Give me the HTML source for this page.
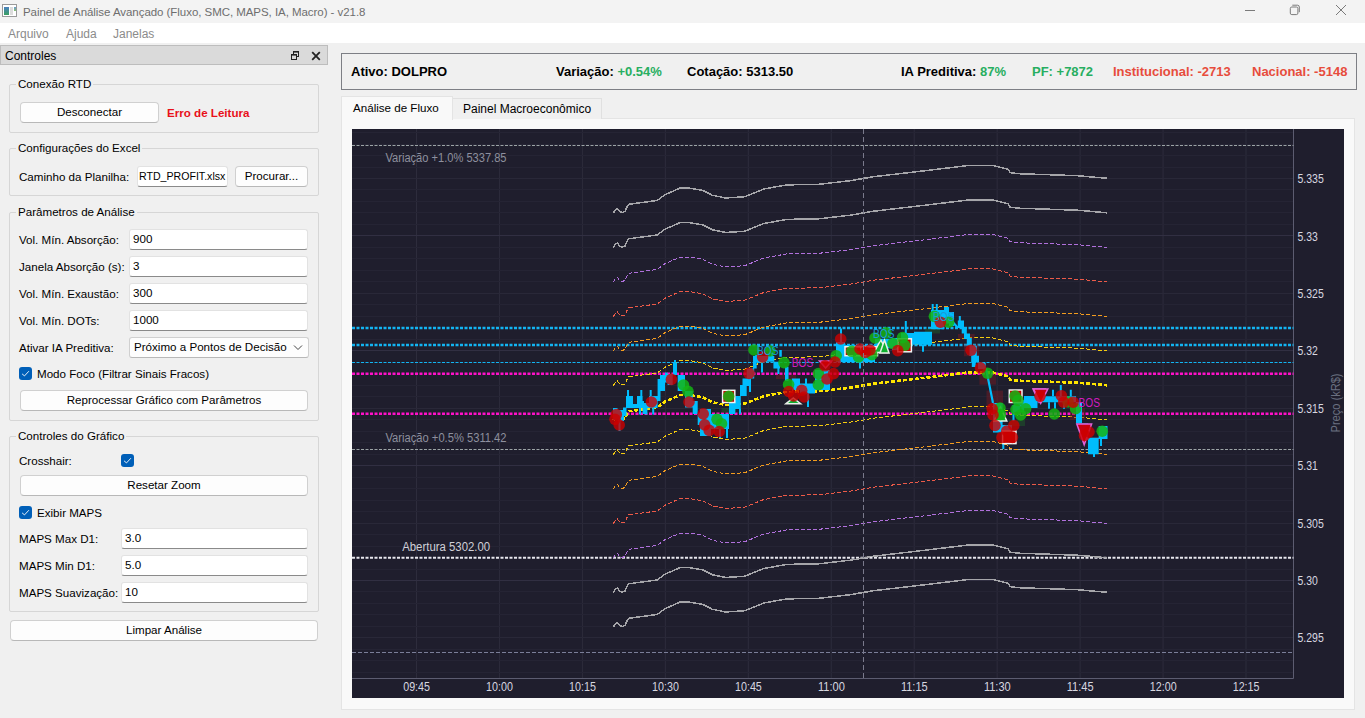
<!DOCTYPE html>
<html><head><meta charset="utf-8">
<style>
*{margin:0;padding:0;box-sizing:border-box}
html,body{width:1365px;height:718px;overflow:hidden;background:#f0f0f0;font-family:"Liberation Sans",sans-serif;font-size:11.6px;color:#000}
.a{position:absolute;white-space:nowrap}
#tb{position:absolute;left:0;top:0;width:1365px;height:23px;background:#f3f3f3}
#mb{position:absolute;left:0;top:23px;width:1365px;height:20px;background:#fff}
.mi{position:absolute;top:27px;color:#8b8b8b;font-size:12px}
#dockt{position:absolute;left:0;top:45px;width:328px;height:20px;background:#dadada;border:1px solid #bdbdbd}
.grp{position:absolute;border:1px solid #d6d6d6;border-radius:2px}
.gt{position:absolute;background:#f0f0f0;padding:0 2px;line-height:13px}
.btn{position:absolute;background:#fdfdfd;border:1px solid #d0d0d0;border-bottom-color:#b8b8b8;border-radius:4px;text-align:center;line-height:18px}
.inp{position:absolute;background:#fff;border:1px solid #e2e2e2;border-bottom:1px solid #8a8a8a;border-radius:3px;padding-left:3px;line-height:18px}
.lbl{position:absolute;line-height:14px}
.chk{position:absolute;width:13px;height:13px;background:#005fb8;border-radius:3px}
.chk svg{position:absolute;left:0;top:0}
</style></head><body>
<div id="tb"></div>
<!-- app icon -->
<div class="a" style="left:2px;top:4px;width:15px;height:13px;border:1px solid #9a9a9a;background:#fff">
 <div class="a" style="left:1px;top:2px;width:5px;height:8px;background:linear-gradient(#4a7fc0,#3aa060)"></div>
 <div class="a" style="left:7px;top:2px;width:3px;height:8px;background:#ddd"></div>
 <div class="a" style="left:11px;top:2px;width:2px;height:4px;background:linear-gradient(#6a9ad0,#8ac070)"></div>
</div>
<div class="a" style="left:23px;top:5px;font-size:11.5px;color:#6e6e6e;line-height:14px;letter-spacing:-0.05px">Painel de Análise Avançado (Fluxo, SMC, MAPS, IA, Macro) - v21.8</div>
<!-- window controls -->
<div class="a" style="left:1245px;top:10px;width:10px;height:1px;background:#7a7a7a"></div>
<svg class="a" style="left:1288px;top:4px" width="14" height="13"><rect x="2.3" y="3" width="7.6" height="7.6" rx="1.5" fill="none" stroke="#7a7a7a"/><path d="M4.3 1.2h5.2a1.8 1.8 0 0 1 1.8 1.8v5.2" fill="none" stroke="#7a7a7a"/></svg>
<svg class="a" style="left:1335px;top:4px" width="12" height="12"><path d="M1 1L11 11M11 1L1 11" stroke="#7a7a7a" stroke-width="1"/></svg>
<div id="mb"></div>
<div class="mi" style="left:8px">Arquivo</div>
<div class="mi" style="left:66px">Ajuda</div>
<div class="mi" style="left:113px">Janelas</div>

<!-- dock -->
<div id="dockt"></div>
<div class="a" style="left:5px;top:49px;font-size:12px;line-height:14px">Controles</div>
<svg class="a" style="left:290px;top:50px" width="11" height="11"><rect x="3.5" y="1.5" width="5" height="5" fill="#dadada" stroke="#222"/><rect x="3" y="1" width="6" height="1.6" fill="#222"/><rect x="1.5" y="4.5" width="5" height="5" fill="#dadada" stroke="#222"/><rect x="1" y="4" width="6" height="1.6" fill="#222"/></svg>
<svg class="a" style="left:310.5px;top:51px" width="10" height="10"><path d="M1.2 1.2L8.8 8.8M8.8 1.2L1.2 8.8" stroke="#222" stroke-width="1.8"/></svg>

<!-- Conexao RTD -->
<div class="grp" style="left:9px;top:84px;width:310px;height:49px"></div>
<div class="gt" style="left:16px;top:77px">Conexão RTD</div>
<div class="btn" style="left:20px;top:102px;width:139px;height:21px">Desconectar</div>
<div class="lbl" style="left:167px;top:106px;color:#e8101a;font-weight:bold">Erro de Leitura</div>

<!-- Excel -->
<div class="grp" style="left:9px;top:148px;width:310px;height:48px"></div>
<div class="gt" style="left:16px;top:141px">Configurações do Excel</div>
<div class="lbl" style="left:19px;top:170px">Caminho da Planilha:</div>
<div class="inp" style="left:137px;top:166px;width:91px;height:21px;font-size:10.6px;padding-left:1px">RTD_PROFIT.xlsx</div>
<div class="btn" style="left:235px;top:166px;width:73px;height:21px">Procurar...</div>

<!-- Parametros -->
<div class="grp" style="left:9px;top:212px;width:310px;height:209px"></div>
<div class="gt" style="left:16px;top:205px">Parâmetros de Análise</div>
<div class="lbl" style="left:19px;top:233px">Vol. Mín. Absorção:</div>
<div class="inp" style="left:129px;top:229px;width:179px;height:21px">900</div>
<div class="lbl" style="left:19px;top:260px">Janela Absorção (s):</div>
<div class="inp" style="left:129px;top:256px;width:179px;height:21px">3</div>
<div class="lbl" style="left:19px;top:287px">Vol. Mín. Exaustão:</div>
<div class="inp" style="left:129px;top:283px;width:179px;height:21px">300</div>
<div class="lbl" style="left:19px;top:314px">Vol. Mín. DOTs:</div>
<div class="inp" style="left:129px;top:310px;width:179px;height:21px">1000</div>
<div class="lbl" style="left:19px;top:341px">Ativar IA Preditiva:</div>
<div class="btn" style="left:129px;top:337px;width:180px;height:21px;text-align:left;padding-left:4px;border-radius:3px">Próximo a Pontos de Decisão</div>
<svg class="a" style="left:293px;top:344px" width="10" height="7"><path d="M1 1.5L5 5.5L9 1.5" fill="none" stroke="#444" stroke-width="1"/></svg>
<div class="chk" style="left:19px;top:367px"><svg width="13" height="13"><path d="M3.1 6.9L5.5 8.9L9.9 4.2" fill="none" stroke="#fff" stroke-width="0.9"/></svg></div>
<div class="lbl" style="left:37px;top:367px">Modo Foco (Filtrar Sinais Fracos)</div>
<div class="btn" style="left:20px;top:390px;width:288px;height:21px">Reprocessar Gráfico com Parâmetros</div>

<!-- Controles do Grafico -->
<div class="grp" style="left:9px;top:436px;width:310px;height:176px"></div>
<div class="gt" style="left:16px;top:429px">Controles do Gráfico</div>
<div class="lbl" style="left:19px;top:454px">Crosshair:</div>
<div class="chk" style="left:121px;top:454px"><svg width="13" height="13"><path d="M3.1 6.9L5.5 8.9L9.9 4.2" fill="none" stroke="#fff" stroke-width="0.9"/></svg></div>
<div class="btn" style="left:20px;top:475px;width:288px;height:21px">Resetar Zoom</div>
<div class="chk" style="left:19px;top:506px"><svg width="13" height="13"><path d="M3.1 6.9L5.5 8.9L9.9 4.2" fill="none" stroke="#fff" stroke-width="0.9"/></svg></div>
<div class="lbl" style="left:37px;top:506px">Exibir MAPS</div>
<div class="lbl" style="left:19px;top:532px">MAPS Max D1:</div>
<div class="inp" style="left:121px;top:528px;width:187px;height:21px">3.0</div>
<div class="lbl" style="left:19px;top:559px">MAPS Min D1:</div>
<div class="inp" style="left:121px;top:555px;width:187px;height:21px">5.0</div>
<div class="lbl" style="left:19px;top:586px">MAPS Suavização:</div>
<div class="inp" style="left:121px;top:582px;width:187px;height:21px">10</div>
<div class="btn" style="left:10px;top:620px;width:308px;height:21px">Limpar Análise</div>

<!-- RIGHT -->
<div class="a" style="left:341px;top:53px;width:1016px;height:37px;border:1px solid #7d7f85;background:#f0f0f0"></div>
<div class="a" style="top:64px;font-size:13px;font-weight:bold;line-height:15px;left:351px">Ativo: DOLPRO</div>
<div class="a" style="top:64px;font-size:13px;font-weight:bold;line-height:15px;left:556px">Variação: <span style="color:#27ae60">+0.54%</span></div>
<div class="a" style="top:64px;font-size:13px;font-weight:bold;line-height:15px;left:687px">Cotação: 5313.50</div>
<div class="a" style="top:64px;font-size:13px;font-weight:bold;line-height:15px;left:901px">IA Preditiva: <span style="color:#27ae60">87%</span></div>
<div class="a" style="top:64px;font-size:13px;font-weight:bold;line-height:15px;left:1032px;color:#27ae60">PF: +7872</div>
<div class="a" style="top:64px;font-size:13px;font-weight:bold;line-height:15px;left:1113px;color:#e74c3c">Institucional: -2713</div>
<div class="a" style="top:64px;font-size:13px;font-weight:bold;line-height:15px;left:1252px;color:#e74c3c">Nacional: -5148</div>

<!-- tabs -->
<div class="a" style="left:341px;top:118px;width:1014px;height:592px;background:#f9f9f9;border:1px solid #e4e4e4"></div>
<div class="a" style="left:452px;top:98px;width:150px;height:21px;background:#f0f0f0;border:1px solid #e0e0e0;border-bottom:none"></div>
<div class="a" style="left:341px;top:96px;width:112px;height:24px;background:#f9f9f9;border:1px solid #e4e4e4;border-bottom:none"></div>
<div class="a" style="left:353px;top:101px;font-size:11.6px;line-height:14px">Análise de Fluxo</div>
<div class="a" style="left:463px;top:102px;font-size:12px;line-height:14px">Painel Macroeconômico</div>

<!-- chart -->
<div class="a" style="left:352px;top:129px;width:992px;height:569px;background:#1f1e2d"></div>
<svg id="chart" class="a" style="left:0;top:0" width="1365" height="718">
<line x1="416.50" y1="129" x2="416.50" y2="678.5" stroke="#2d2c3c" stroke-width="1"/>
<line x1="499.45" y1="129" x2="499.45" y2="678.5" stroke="#2d2c3c" stroke-width="1"/>
<line x1="582.40" y1="129" x2="582.40" y2="678.5" stroke="#2d2c3c" stroke-width="1"/>
<line x1="665.35" y1="129" x2="665.35" y2="678.5" stroke="#2d2c3c" stroke-width="1"/>
<line x1="748.30" y1="129" x2="748.30" y2="678.5" stroke="#2d2c3c" stroke-width="1"/>
<line x1="831.25" y1="129" x2="831.25" y2="678.5" stroke="#2d2c3c" stroke-width="1"/>
<line x1="914.20" y1="129" x2="914.20" y2="678.5" stroke="#2d2c3c" stroke-width="1"/>
<line x1="997.15" y1="129" x2="997.15" y2="678.5" stroke="#2d2c3c" stroke-width="1"/>
<line x1="1080.10" y1="129" x2="1080.10" y2="678.5" stroke="#2d2c3c" stroke-width="1"/>
<line x1="1163.05" y1="129" x2="1163.05" y2="678.5" stroke="#2d2c3c" stroke-width="1"/>
<line x1="1246.00" y1="129" x2="1246.00" y2="678.5" stroke="#2d2c3c" stroke-width="1"/>
<line x1="352" y1="132.50" x2="1293.5" y2="132.50" stroke="#252434" stroke-width="1"/>
<line x1="352" y1="144.50" x2="1293.5" y2="144.50" stroke="#252434" stroke-width="1"/>
<line x1="352" y1="155.50" x2="1293.5" y2="155.50" stroke="#252434" stroke-width="1"/>
<line x1="352" y1="167.50" x2="1293.5" y2="167.50" stroke="#252434" stroke-width="1"/>
<line x1="352" y1="178.50" x2="1293.5" y2="178.50" stroke="#292838" stroke-width="1"/>
<line x1="352" y1="189.50" x2="1293.5" y2="189.50" stroke="#252434" stroke-width="1"/>
<line x1="352" y1="201.50" x2="1293.5" y2="201.50" stroke="#252434" stroke-width="1"/>
<line x1="352" y1="212.50" x2="1293.5" y2="212.50" stroke="#252434" stroke-width="1"/>
<line x1="352" y1="224.50" x2="1293.5" y2="224.50" stroke="#252434" stroke-width="1"/>
<line x1="352" y1="235.50" x2="1293.5" y2="235.50" stroke="#312f42" stroke-width="1"/>
<line x1="352" y1="247.50" x2="1293.5" y2="247.50" stroke="#252434" stroke-width="1"/>
<line x1="352" y1="258.50" x2="1293.5" y2="258.50" stroke="#252434" stroke-width="1"/>
<line x1="352" y1="270.50" x2="1293.5" y2="270.50" stroke="#252434" stroke-width="1"/>
<line x1="352" y1="281.50" x2="1293.5" y2="281.50" stroke="#252434" stroke-width="1"/>
<line x1="352" y1="293.50" x2="1293.5" y2="293.50" stroke="#292838" stroke-width="1"/>
<line x1="352" y1="304.50" x2="1293.5" y2="304.50" stroke="#252434" stroke-width="1"/>
<line x1="352" y1="316.50" x2="1293.5" y2="316.50" stroke="#252434" stroke-width="1"/>
<line x1="352" y1="327.50" x2="1293.5" y2="327.50" stroke="#252434" stroke-width="1"/>
<line x1="352" y1="339.50" x2="1293.5" y2="339.50" stroke="#252434" stroke-width="1"/>
<line x1="352" y1="350.50" x2="1293.5" y2="350.50" stroke="#312f42" stroke-width="1"/>
<line x1="352" y1="362.50" x2="1293.5" y2="362.50" stroke="#252434" stroke-width="1"/>
<line x1="352" y1="373.50" x2="1293.5" y2="373.50" stroke="#252434" stroke-width="1"/>
<line x1="352" y1="385.50" x2="1293.5" y2="385.50" stroke="#252434" stroke-width="1"/>
<line x1="352" y1="396.50" x2="1293.5" y2="396.50" stroke="#252434" stroke-width="1"/>
<line x1="352" y1="408.50" x2="1293.5" y2="408.50" stroke="#292838" stroke-width="1"/>
<line x1="352" y1="419.50" x2="1293.5" y2="419.50" stroke="#252434" stroke-width="1"/>
<line x1="352" y1="431.50" x2="1293.5" y2="431.50" stroke="#252434" stroke-width="1"/>
<line x1="352" y1="442.50" x2="1293.5" y2="442.50" stroke="#252434" stroke-width="1"/>
<line x1="352" y1="454.50" x2="1293.5" y2="454.50" stroke="#252434" stroke-width="1"/>
<line x1="352" y1="465.50" x2="1293.5" y2="465.50" stroke="#312f42" stroke-width="1"/>
<line x1="352" y1="477.50" x2="1293.5" y2="477.50" stroke="#252434" stroke-width="1"/>
<line x1="352" y1="488.50" x2="1293.5" y2="488.50" stroke="#252434" stroke-width="1"/>
<line x1="352" y1="500.50" x2="1293.5" y2="500.50" stroke="#252434" stroke-width="1"/>
<line x1="352" y1="511.50" x2="1293.5" y2="511.50" stroke="#252434" stroke-width="1"/>
<line x1="352" y1="523.50" x2="1293.5" y2="523.50" stroke="#292838" stroke-width="1"/>
<line x1="352" y1="534.50" x2="1293.5" y2="534.50" stroke="#252434" stroke-width="1"/>
<line x1="352" y1="546.50" x2="1293.5" y2="546.50" stroke="#252434" stroke-width="1"/>
<line x1="352" y1="557.50" x2="1293.5" y2="557.50" stroke="#252434" stroke-width="1"/>
<line x1="352" y1="569.50" x2="1293.5" y2="569.50" stroke="#252434" stroke-width="1"/>
<line x1="352" y1="580.50" x2="1293.5" y2="580.50" stroke="#312f42" stroke-width="1"/>
<line x1="352" y1="591.50" x2="1293.5" y2="591.50" stroke="#252434" stroke-width="1"/>
<line x1="352" y1="603.50" x2="1293.5" y2="603.50" stroke="#252434" stroke-width="1"/>
<line x1="352" y1="614.50" x2="1293.5" y2="614.50" stroke="#252434" stroke-width="1"/>
<line x1="352" y1="626.50" x2="1293.5" y2="626.50" stroke="#252434" stroke-width="1"/>
<line x1="352" y1="637.50" x2="1293.5" y2="637.50" stroke="#292838" stroke-width="1"/>
<line x1="352" y1="649.50" x2="1293.5" y2="649.50" stroke="#252434" stroke-width="1"/>
<line x1="352" y1="660.50" x2="1293.5" y2="660.50" stroke="#252434" stroke-width="1"/>
<line x1="352" y1="672.50" x2="1293.5" y2="672.50" stroke="#252434" stroke-width="1"/>
<line x1="1293.5" y1="129" x2="1293.5" y2="678.5" stroke="#5c5c70" stroke-width="1"/>
<line x1="352" y1="678.5" x2="1293.5" y2="678.5" stroke="#5c5c70" stroke-width="1"/>
<text x="1297.5" y="183.2" fill="#d8d8e0" font-size="12" textLength="26.3" lengthAdjust="spacingAndGlyphs">5.335</text>
<text x="1297.5" y="240.6" fill="#d8d8e0" font-size="12" textLength="20.3" lengthAdjust="spacingAndGlyphs">5.33</text>
<text x="1297.5" y="298.0" fill="#d8d8e0" font-size="12" textLength="26.3" lengthAdjust="spacingAndGlyphs">5.325</text>
<text x="1297.5" y="355.4" fill="#d8d8e0" font-size="12" textLength="20.3" lengthAdjust="spacingAndGlyphs">5.32</text>
<text x="1297.5" y="412.8" fill="#d8d8e0" font-size="12" textLength="26.3" lengthAdjust="spacingAndGlyphs">5.315</text>
<text x="1297.5" y="470.2" fill="#d8d8e0" font-size="12" textLength="20.3" lengthAdjust="spacingAndGlyphs">5.31</text>
<text x="1297.5" y="527.6" fill="#d8d8e0" font-size="12" textLength="26.3" lengthAdjust="spacingAndGlyphs">5.305</text>
<text x="1297.5" y="585.0" fill="#d8d8e0" font-size="12" textLength="20.3" lengthAdjust="spacingAndGlyphs">5.30</text>
<text x="1297.5" y="642.4" fill="#d8d8e0" font-size="12" textLength="26.3" lengthAdjust="spacingAndGlyphs">5.295</text>
<text x="403.2" y="691" fill="#d8d8e0" font-size="12" textLength="26.8" lengthAdjust="spacingAndGlyphs">09:45</text>
<text x="486.1" y="691" fill="#d8d8e0" font-size="12" textLength="26.8" lengthAdjust="spacingAndGlyphs">10:00</text>
<text x="569.1" y="691" fill="#d8d8e0" font-size="12" textLength="26.8" lengthAdjust="spacingAndGlyphs">10:15</text>
<text x="652.1" y="691" fill="#d8d8e0" font-size="12" textLength="26.8" lengthAdjust="spacingAndGlyphs">10:30</text>
<text x="735.0" y="691" fill="#d8d8e0" font-size="12" textLength="26.8" lengthAdjust="spacingAndGlyphs">10:45</text>
<text x="818.0" y="691" fill="#d8d8e0" font-size="12" textLength="26.8" lengthAdjust="spacingAndGlyphs">11:00</text>
<text x="900.9" y="691" fill="#d8d8e0" font-size="12" textLength="26.8" lengthAdjust="spacingAndGlyphs">11:15</text>
<text x="983.9" y="691" fill="#d8d8e0" font-size="12" textLength="26.8" lengthAdjust="spacingAndGlyphs">11:30</text>
<text x="1066.8" y="691" fill="#d8d8e0" font-size="12" textLength="26.8" lengthAdjust="spacingAndGlyphs">11:45</text>
<text x="1149.8" y="691" fill="#d8d8e0" font-size="12" textLength="26.8" lengthAdjust="spacingAndGlyphs">12:00</text>
<text x="1232.7" y="691" fill="#d8d8e0" font-size="12" textLength="26.8" lengthAdjust="spacingAndGlyphs">12:15</text>
<text transform="translate(1339.5,432.5) rotate(-90)" fill="#6a7080" font-size="12" textLength="59" lengthAdjust="spacingAndGlyphs">Preço (kR$)</text>
<line x1="352" y1="145.5" x2="1293.5" y2="145.5" stroke="#9ca4a6" stroke-width="1.1" stroke-dasharray="3 1.5"/>
<line x1="352" y1="449.5" x2="1293.5" y2="449.5" stroke="#9ca4a6" stroke-width="1.1" stroke-dasharray="3 1.5"/>
<line x1="352" y1="652.5" x2="1293.5" y2="652.5" stroke="#7a7e98" stroke-width="1.1" stroke-dasharray="4 2"/>
<line x1="352" y1="557.8" x2="1293.5" y2="557.8" stroke="#e8e8ee" stroke-width="2" stroke-dasharray="3 1.5"/>
<line x1="352" y1="328" x2="1293.5" y2="328" stroke="#12b4f2" stroke-width="2.4" stroke-dasharray="3 1.5"/>
<line x1="352" y1="345" x2="1293.5" y2="345" stroke="#12b4f2" stroke-width="2.4" stroke-dasharray="3 1.5"/>
<line x1="352" y1="362.5" x2="1293.5" y2="362.5" stroke="#12b4f2" stroke-width="1.2" stroke-dasharray="3 1.5"/>
<line x1="352" y1="373.8" x2="1293.5" y2="373.8" stroke="#ff10c8" stroke-width="2.4" stroke-dasharray="3 1.5"/>
<line x1="352" y1="413.8" x2="1293.5" y2="413.8" stroke="#ff10c8" stroke-width="2.4" stroke-dasharray="3 1.5"/>
<text x="385.5" y="162" fill="#8e909e" font-size="12" textLength="121" lengthAdjust="spacingAndGlyphs">Variação +1.0% 5337.85</text>
<text x="385.5" y="442" fill="#8e909e" font-size="12" textLength="121" lengthAdjust="spacingAndGlyphs">Variação +0.5% 5311.42</text>
<text x="402.2" y="551" fill="#d0d0d8" font-size="12" textLength="88" lengthAdjust="spacingAndGlyphs">Abertura 5302.00</text>
<polyline points="613.3,213.2 615.5,209.5 617.5,208.5 619.5,211.5 622.0,212.5 625.0,211.5 627.0,207.0 628.6,204.3 657.1,200.5 664.8,194.8 680.0,188.1 689.5,188.1 702.9,190.4 712.4,195.3 725.7,198.0 744.8,196.7 763.8,189.0 786.7,184.9 819.0,184.3 850.0,180.7 873.7,176.7 933.0,169.8 968.7,165.4 992.4,165.4 1008.2,169.4 1010.2,172.7 1018.1,173.7 1047.8,174.7 1077.5,175.7 1107.1,178.3" fill="none" stroke="#a6a6aa" stroke-width="1.5" shape-rendering="crispEdges"/>
<polyline points="613.3,247.7 615.5,244.0 617.5,243.0 619.5,246.0 622.0,247.0 625.0,246.0 627.0,241.5 628.6,238.8 657.1,235.0 664.8,229.3 680.0,222.6 689.5,222.6 702.9,224.9 712.4,229.8 725.7,232.5 744.8,231.2 763.8,223.5 786.7,219.4 819.0,218.8 850.0,215.2 873.7,211.2 933.0,204.3 968.7,199.9 992.4,199.9 1008.2,203.9 1010.2,207.2 1018.1,208.2 1047.8,209.2 1077.5,210.2 1107.1,212.8" fill="none" stroke="#a6a6aa" stroke-width="1.5" shape-rendering="crispEdges"/>
<polyline points="613.3,282.2 615.5,278.5 617.5,277.5 619.5,280.5 622.0,281.5 625.0,280.5 627.0,276.0 628.6,273.3 657.1,269.5 664.8,263.8 680.0,257.1 689.5,257.1 702.9,259.4 712.4,264.3 725.7,267.0 744.8,265.7 763.8,258.0 786.7,253.9 819.0,253.3 850.0,249.7 873.7,245.7 933.0,238.8 968.7,234.4 992.4,234.4 1008.2,238.4 1010.2,241.7 1018.1,242.7 1047.8,243.7 1077.5,244.7 1107.1,247.3" fill="none" stroke="#b070dc" stroke-width="1" stroke-dasharray="4 2" shape-rendering="crispEdges"/>
<polyline points="613.3,316.7 615.5,313.0 617.5,312.0 619.5,315.0 622.0,316.0 625.0,315.0 627.0,310.5 628.6,307.8 657.1,304.0 664.8,298.3 680.0,291.6 689.5,291.6 702.9,293.9 712.4,298.8 725.7,301.5 744.8,300.2 763.8,292.5 786.7,288.4 819.0,287.8 850.0,284.2 873.7,280.2 933.0,273.3 968.7,268.9 992.4,268.9 1008.2,272.9 1010.2,276.2 1018.1,277.2 1047.8,278.2 1077.5,279.2 1107.1,281.8" fill="none" stroke="#ec5a48" stroke-width="1" stroke-dasharray="4 2" shape-rendering="crispEdges"/>
<polyline points="613.3,351.2 615.5,347.5 617.5,346.5 619.5,349.5 622.0,350.5 625.0,349.5 627.0,345.0 628.6,342.3 657.1,338.5 664.8,332.8 680.0,326.1 689.5,326.1 702.9,328.4 712.4,333.3 725.7,336.0 744.8,334.7 763.8,327.0 786.7,322.9 819.0,322.3 850.0,318.7 873.7,314.7 933.0,307.8 968.7,303.4 992.4,303.4 1008.2,307.4 1010.2,310.7 1018.1,311.7 1047.8,312.7 1077.5,313.7 1107.1,316.3" fill="none" stroke="#f39c1e" stroke-width="1" stroke-dasharray="4 2" shape-rendering="crispEdges"/>
<polyline points="613.3,385.7 615.5,382.0 617.5,381.0 619.5,384.0 622.0,385.0 625.0,384.0 627.0,379.5 628.6,376.8 657.1,373.0 664.8,367.3 680.0,360.6 689.5,360.6 702.9,362.9 712.4,367.8 725.7,370.5 744.8,369.2 763.8,361.5 786.7,357.4 819.0,356.8 850.0,353.2 873.7,349.2 933.0,342.3 968.7,337.9 992.4,337.9 1008.2,341.9 1010.2,345.2 1018.1,346.2 1047.8,347.2 1077.5,348.2 1107.1,350.8" fill="none" stroke="#f5cc10" stroke-width="1" stroke-dasharray="4 2" shape-rendering="crispEdges"/>
<polyline points="613.3,420.2 615.5,416.5 617.5,415.5 619.5,418.5 622.0,419.5 625.0,418.5 627.0,414.0 628.6,411.3 657.1,407.5 664.8,401.8 680.0,395.1 689.5,395.1 702.9,397.4 712.4,402.3 725.7,405.0 744.8,403.7 763.8,396.0 786.7,391.9 819.0,391.3 850.0,387.7 873.7,383.7 933.0,376.8 968.7,372.4 992.4,372.4 1008.2,376.4 1010.2,379.7 1018.1,380.7 1047.8,381.7 1077.5,382.7 1107.1,385.3" fill="none" stroke="#ffe400" stroke-width="2.6" stroke-dasharray="4 2" shape-rendering="crispEdges"/>
<polyline points="613.3,454.7 615.5,451.0 617.5,450.0 619.5,453.0 622.0,454.0 625.0,453.0 627.0,448.5 628.6,445.8 657.1,442.0 664.8,436.3 680.0,429.6 689.5,429.6 702.9,431.9 712.4,436.8 725.7,439.5 744.8,438.2 763.8,430.5 786.7,426.4 819.0,425.8 850.0,422.2 873.7,418.2 933.0,411.3 968.7,406.9 992.4,406.9 1008.2,410.9 1010.2,414.2 1018.1,415.2 1047.8,416.2 1077.5,417.2 1107.1,419.8" fill="none" stroke="#f5cc10" stroke-width="1" stroke-dasharray="4 2" shape-rendering="crispEdges"/>
<polyline points="613.3,489.2 615.5,485.5 617.5,484.5 619.5,487.5 622.0,488.5 625.0,487.5 627.0,483.0 628.6,480.3 657.1,476.5 664.8,470.8 680.0,464.1 689.5,464.1 702.9,466.4 712.4,471.3 725.7,474.0 744.8,472.7 763.8,465.0 786.7,460.9 819.0,460.3 850.0,456.7 873.7,452.7 933.0,445.8 968.7,441.4 992.4,441.4 1008.2,445.4 1010.2,448.7 1018.1,449.7 1047.8,450.7 1077.5,451.7 1107.1,454.3" fill="none" stroke="#f39c1e" stroke-width="1" stroke-dasharray="4 2" shape-rendering="crispEdges"/>
<polyline points="613.3,523.7 615.5,520.0 617.5,519.0 619.5,522.0 622.0,523.0 625.0,522.0 627.0,517.5 628.6,514.8 657.1,511.0 664.8,505.3 680.0,498.6 689.5,498.6 702.9,500.9 712.4,505.8 725.7,508.5 744.8,507.2 763.8,499.5 786.7,495.4 819.0,494.8 850.0,491.2 873.7,487.2 933.0,480.3 968.7,475.9 992.4,475.9 1008.2,479.9 1010.2,483.2 1018.1,484.2 1047.8,485.2 1077.5,486.2 1107.1,488.8" fill="none" stroke="#ec5a48" stroke-width="1" stroke-dasharray="4 2" shape-rendering="crispEdges"/>
<polyline points="613.3,558.2 615.5,554.5 617.5,553.5 619.5,556.5 622.0,557.5 625.0,556.5 627.0,552.0 628.6,549.3 657.1,545.5 664.8,539.8 680.0,533.1 689.5,533.1 702.9,535.4 712.4,540.3 725.7,543.0 744.8,541.7 763.8,534.0 786.7,529.9 819.0,529.3 850.0,525.7 873.7,521.7 933.0,514.8 968.7,510.4 992.4,510.4 1008.2,514.4 1010.2,517.7 1018.1,518.7 1047.8,519.7 1077.5,520.7 1107.1,523.3" fill="none" stroke="#b070dc" stroke-width="1" stroke-dasharray="4 2" shape-rendering="crispEdges"/>
<polyline points="613.3,592.7 615.5,589.0 617.5,588.0 619.5,591.0 622.0,592.0 625.0,591.0 627.0,586.5 628.6,583.8 657.1,580.0 664.8,574.3 680.0,567.6 689.5,567.6 702.9,569.9 712.4,574.8 725.7,577.5 744.8,576.2 763.8,568.5 786.7,564.4 819.0,563.8 850.0,560.2 873.7,556.2 933.0,549.3 968.7,544.9 992.4,544.9 1008.2,548.9 1010.2,552.2 1018.1,553.2 1047.8,554.2 1077.5,555.2 1107.1,557.8" fill="none" stroke="#a6a6aa" stroke-width="1.5" shape-rendering="crispEdges"/>
<polyline points="613.3,627.2 615.5,623.5 617.5,622.5 619.5,625.5 622.0,626.5 625.0,625.5 627.0,621.0 628.6,618.3 657.1,614.5 664.8,608.8 680.0,602.1 689.5,602.1 702.9,604.4 712.4,609.3 725.7,612.0 744.8,610.7 763.8,603.0 786.7,598.9 819.0,598.3 850.0,594.7 873.7,590.7 933.0,583.8 968.7,579.4 992.4,579.4 1008.2,583.4 1010.2,586.7 1018.1,587.7 1047.8,588.7 1077.5,589.7 1107.1,592.3" fill="none" stroke="#a6a6aa" stroke-width="1.5" shape-rendering="crispEdges"/>
<rect x="776" y="374.7" width="20.0" height="4.3" fill="#7a1a24" fill-opacity="0.45"/>
<rect x="964" y="344.5" width="15.4" height="11.8" fill="#7a1a24" fill-opacity="0.45"/>
<rect x="979.4" y="374" width="16.6" height="10.7" fill="#7a1a24" fill-opacity="0.45"/>
<rect x="986.5" y="390.6" width="16.5" height="17.8" fill="#7a1a24" fill-opacity="0.45"/>
<rect x="958" y="334" width="16.7" height="4.8" fill="#7a1a24" fill-opacity="0.45"/>
<rect x="1070" y="408" width="15.0" height="12.0" fill="#7a1a24" fill-opacity="0.45"/>
<rect x="1090" y="437" width="10.0" height="4.0" fill="#7a1a24" fill-opacity="0.45"/>
<rect x="721.5" y="408" width="14.5" height="4.6" fill="#1e5a2a" fill-opacity="0.5"/>
<rect x="925" y="328.7" width="15.0" height="4.8" fill="#1e5a2a" fill-opacity="0.5"/>
<rect x="1009" y="420" width="16.0" height="6.0" fill="#1e5a2a" fill-opacity="0.5"/>
<path d="M613 408h4.5v12.0h-4.5zM617.5 410h6.5v11.0h-6.5zM623 407.6h3.5v8.4h-3.5zM626 396h16.6v12.0h-16.6zM642.6 401h3.9v13.0h-3.9zM646 396h11.6v12.0h-11.6zM657.6 379h2.9v22.0h-2.9zM660 375h5.0v16.0h-5.0zM665 372.5h2.6v10.0h-2.6zM667.6 374h5.1v11.0h-5.1zM673 362.5h4.0v12.5h-4.0zM677.7 375h7.3v16.0h-7.3zM685 391h7.7v16.6h-7.7zM692.7 401h5.0v13.0h-5.0zM697.7 414h7.3v11.0h-7.3zM700 409h11.0v27.0h-11.0zM711 414h18.0v15.0h-18.0zM729 400h6.3v14.0h-6.3zM735.3 396h5.5v13.0h-5.5zM740 385h6.7v11.0h-6.7zM742.5 378.4h8.5v7.6h-8.5zM746.7 368.4h7.5v10.0h-7.5zM753 356h3.7v12.4h-3.7zM755 355h4.2v7.6h-4.2zM759.2 356h3.4v6.6h-3.4zM762.6 356h11.7v5.7h-11.7zM773.4 361.7h6.6v6.7h-6.6zM779.3 350h2.5v6.7h-2.5zM785 366.7h3.5v14.3h-3.5zM791.8 378.4h8.2v11.6h-8.2zM800 383.6h15.0v10.0h-15.0zM815 370h15.0v20.0h-15.0zM836 342h9.0v20.0h-9.0zM843.5 345h31.5v17.0h-31.5zM875 338.8h17.0v9.5h-17.0zM892 338h9.0v12.0h-9.0zM901 332.9h13.0v11.8h-13.0zM914 331.7h18.0v13.0h-18.0zM931 310h13.0v19.3h-13.0zM944 307h5.0v16.4h-5.0zM949 312h5.0v14.0h-5.0zM957.8 320.6h6.2v7.4h-6.2zM961.7 328h5.1v5.4h-5.1zM964 333.4h6.0v5.6h-6.0zM966.8 338h5.0v7.7h-5.0zM969.5 345.7h7.3v10.0h-7.3zM971.2 355.7h7.8v6.7h-7.8zM971.8 362.4h3.9v4.6h-3.9zM978 362.4h7.7v6.6h-7.7zM993 403h9.6v29.5h-9.6zM1002.6 425h9.4v18.0h-9.4zM1024 396h13.5v12.0h-13.5zM1014 400h10.0v12.0h-10.0zM1030 396.3h46.0v5.9h-46.0zM1076 402h6.0v21.5h-6.0zM1082 423.5h6.0v16.5h-6.0zM1088 437.7h10.7v16.6h-10.7zM1098.7 426h8.8v13.0h-8.8z" fill="#00bdfd"/>
<path d="M986 368.4L993 403M950 319L958 328" stroke="#00bdfd" stroke-width="2.2"/>
<path d="M619.5 420V431M628 390V396M641.3 390V396M650.7 390V396M640 408V414.5M646.4 408V414.5M653.2 408V414.5M675 360V363M720 429V438M727 429V438M740 409V414M762 362.6V372.6M772 353V356M778.4 368V374M744 386V394M750 386V392M806 378.6V384M808 393.6V407M841 328.4V345M860 362V368.6M905.8 321V333M923 344.7V351.8M932.7 304V310M936.8 304V310M959.8 316V321M1003.3 443V449M1053 389.8V396.3M1060.8 385V396.3M1070.8 389.8V396.3M1049 402.2V408.7M1055 402.2V408.7M1064 402.2V408.7M1094 454V457M1013.5 405V421M1101 439V446" stroke="#00bdfd" stroke-width="2"/>
<rect x="633" y="396" width="4" height="8" fill="#1f1e2d"/>
<rect x="644" y="396" width="5" height="7" fill="#1f1e2d"/>
<rect x="722.6" y="390.3" width="12.2" height="12.2" fill="#c00000" stroke="#f4f4f4" stroke-width="1.5"/>
<rect x="845" y="346.8" width="16.0" height="8.9" fill="#c00000" stroke="#f4f4f4" stroke-width="1.5"/>
<rect x="861" y="346.8" width="16.5" height="8.9" fill="#c00000" stroke="#f4f4f4" stroke-width="1.5"/>
<rect x="897.8" y="338.8" width="13.6" height="13.0" fill="#c00000" stroke="#f4f4f4" stroke-width="1.5"/>
<rect x="1002.6" y="431" width="13.4" height="12.6" fill="#c00000" stroke="#f4f4f4" stroke-width="1.5"/>
<rect x="1009.3" y="390" width="12.7" height="12.5" fill="#c00000" stroke="#f4f4f4" stroke-width="1.5"/>
<path d="M786 403.7L793.3 398L800.6 403.7z" fill="#10b030" stroke="#e8f0e8" stroke-width="1.5"/>
<path d="M874 352.4L880.8 340L887.5 352.4z" fill="#10b030" stroke="#e8f0e8" stroke-width="1.5"/>
<path d="M880 353L884.5 340L889 353z" fill="#10b030" stroke="#e8f0e8" stroke-width="1.5"/>
<path d="M994 421L1000.4 407L1006.8 421z" fill="#10b030" stroke="#e8f0e8" stroke-width="1.5"/>
<path d="M819.5 361L831.8 361L825.6 368z" fill="#c80010" stroke="#e060d8" stroke-width="1.5"/>
<path d="M1033 389L1045 389L1039.0 402z" fill="#c80010" stroke="#e060d8" stroke-width="1.5"/>
<path d="M1033.5 389L1047.8 389L1040.7 403.4z" fill="#c80010" stroke="#e060d8" stroke-width="1.5"/>
<path d="M1076.8 424L1091.6 424L1084.2 444.8z" fill="#c80010" stroke="#e060d8" stroke-width="1.5"/>
<circle cx="683.5" cy="385" r="5.8" fill="#14b414" fill-opacity="0.85"/>
<circle cx="688" cy="391.4" r="5.8" fill="#14b414" fill-opacity="0.85"/>
<circle cx="717" cy="419.3" r="5.8" fill="#14b414" fill-opacity="0.85"/>
<circle cx="721.5" cy="423.7" r="5.8" fill="#14b414" fill-opacity="0.85"/>
<circle cx="754" cy="350" r="5.8" fill="#14b414" fill-opacity="0.85"/>
<circle cx="770" cy="351" r="5.8" fill="#14b414" fill-opacity="0.85"/>
<circle cx="784" cy="362.6" r="5.8" fill="#14b414" fill-opacity="0.85"/>
<circle cx="788.6" cy="384.5" r="5.8" fill="#14b414" fill-opacity="0.85"/>
<circle cx="818.4" cy="373.6" r="5.8" fill="#14b414" fill-opacity="0.85"/>
<circle cx="818.4" cy="384.7" r="5.8" fill="#14b414" fill-opacity="0.85"/>
<circle cx="836.2" cy="355.7" r="5.8" fill="#14b414" fill-opacity="0.85"/>
<circle cx="851.8" cy="351.3" r="5.8" fill="#14b414" fill-opacity="0.85"/>
<circle cx="858.5" cy="356.9" r="5.8" fill="#14b414" fill-opacity="0.85"/>
<circle cx="871.9" cy="354.6" r="5.8" fill="#14b414" fill-opacity="0.85"/>
<circle cx="875" cy="338" r="5.8" fill="#14b414" fill-opacity="0.85"/>
<circle cx="886" cy="332.9" r="5.8" fill="#14b414" fill-opacity="0.85"/>
<circle cx="893" cy="343.5" r="5.8" fill="#14b414" fill-opacity="0.85"/>
<circle cx="902.5" cy="337.6" r="5.8" fill="#14b414" fill-opacity="0.85"/>
<circle cx="934.4" cy="316.3" r="5.8" fill="#14b414" fill-opacity="0.85"/>
<circle cx="948.6" cy="322.2" r="5.8" fill="#14b414" fill-opacity="0.85"/>
<circle cx="987.5" cy="373.2" r="5.8" fill="#14b414" fill-opacity="0.85"/>
<circle cx="1000" cy="408" r="5.8" fill="#14b414" fill-opacity="0.85"/>
<circle cx="1000.5" cy="414.4" r="5.8" fill="#14b414" fill-opacity="0.85"/>
<circle cx="1015" cy="396" r="5.8" fill="#14b414" fill-opacity="0.85"/>
<circle cx="1018" cy="400.4" r="5.8" fill="#14b414" fill-opacity="0.85"/>
<circle cx="1016" cy="409.5" r="5.8" fill="#14b414" fill-opacity="0.85"/>
<circle cx="1025.6" cy="408.8" r="5.8" fill="#14b414" fill-opacity="0.85"/>
<circle cx="1020.7" cy="415" r="5.8" fill="#14b414" fill-opacity="0.85"/>
<circle cx="1054.3" cy="414" r="5.8" fill="#14b414" fill-opacity="0.85"/>
<circle cx="1075.6" cy="408.7" r="5.8" fill="#14b414" fill-opacity="0.85"/>
<circle cx="1068" cy="402" r="5.8" fill="#14b414" fill-opacity="0.85"/>
<circle cx="1102.2" cy="431.2" r="5.8" fill="#14b414" fill-opacity="0.85"/>
<circle cx="728.7" cy="396.4" r="5.8" fill="#14b414" fill-opacity="0.85"/>
<circle cx="904.6" cy="345.3" r="5.8" fill="#14b414" fill-opacity="0.85"/>
<circle cx="616.3" cy="414.5" r="5.8" fill="#cc0000" fill-opacity="0.8"/>
<circle cx="615" cy="419.3" r="5.8" fill="#cc0000" fill-opacity="0.8"/>
<circle cx="619.2" cy="425" r="5.8" fill="#cc0000" fill-opacity="0.8"/>
<circle cx="651.4" cy="402" r="5.8" fill="#cc0000" fill-opacity="0.8"/>
<circle cx="671.4" cy="379.4" r="5.8" fill="#cc0000" fill-opacity="0.8"/>
<circle cx="689" cy="402" r="5.8" fill="#cc0000" fill-opacity="0.8"/>
<circle cx="703.2" cy="413.9" r="5.8" fill="#cc0000" fill-opacity="0.8"/>
<circle cx="704.7" cy="424.8" r="5.8" fill="#cc0000" fill-opacity="0.8"/>
<circle cx="709.2" cy="430.4" r="5.8" fill="#cc0000" fill-opacity="0.8"/>
<circle cx="719.2" cy="431.5" r="5.8" fill="#cc0000" fill-opacity="0.8"/>
<circle cx="749" cy="373.4" r="5.8" fill="#cc0000" fill-opacity="0.8"/>
<circle cx="762.6" cy="357" r="5.8" fill="#cc0000" fill-opacity="0.8"/>
<circle cx="788.8" cy="391.5" r="5.8" fill="#cc0000" fill-opacity="0.8"/>
<circle cx="793.6" cy="396" r="5.8" fill="#cc0000" fill-opacity="0.8"/>
<circle cx="801.7" cy="390.3" r="5.8" fill="#cc0000" fill-opacity="0.8"/>
<circle cx="804" cy="397" r="5.8" fill="#cc0000" fill-opacity="0.8"/>
<circle cx="825" cy="365.8" r="5.8" fill="#cc0000" fill-opacity="0.8"/>
<circle cx="827" cy="379" r="5.8" fill="#cc0000" fill-opacity="0.8"/>
<circle cx="833.5" cy="373.6" r="5.8" fill="#cc0000" fill-opacity="0.8"/>
<circle cx="835" cy="362" r="5.8" fill="#cc0000" fill-opacity="0.8"/>
<circle cx="840.7" cy="339" r="5.8" fill="#cc0000" fill-opacity="0.8"/>
<circle cx="865.2" cy="352.4" r="5.8" fill="#cc0000" fill-opacity="0.8"/>
<circle cx="870" cy="350" r="5.8" fill="#cc0000" fill-opacity="0.8"/>
<circle cx="860" cy="349" r="5.8" fill="#cc0000" fill-opacity="0.8"/>
<circle cx="897.8" cy="350.6" r="5.8" fill="#cc0000" fill-opacity="0.8"/>
<circle cx="940.4" cy="322.2" r="5.8" fill="#cc0000" fill-opacity="0.8"/>
<circle cx="971" cy="350.2" r="5.8" fill="#cc0000" fill-opacity="0.8"/>
<circle cx="980.5" cy="367.8" r="5.8" fill="#cc0000" fill-opacity="0.8"/>
<circle cx="992.2" cy="408.8" r="5.8" fill="#cc0000" fill-opacity="0.8"/>
<circle cx="993" cy="415" r="5.8" fill="#cc0000" fill-opacity="0.8"/>
<circle cx="995" cy="425.5" r="5.8" fill="#cc0000" fill-opacity="0.8"/>
<circle cx="1006.8" cy="431" r="5.8" fill="#cc0000" fill-opacity="0.8"/>
<circle cx="1002" cy="437.4" r="5.8" fill="#cc0000" fill-opacity="0.8"/>
<circle cx="1012.4" cy="437.4" r="5.8" fill="#cc0000" fill-opacity="0.8"/>
<circle cx="1013.8" cy="425.5" r="5.8" fill="#cc0000" fill-opacity="0.8"/>
<circle cx="1040" cy="396.3" r="5.8" fill="#cc0000" fill-opacity="0.8"/>
<circle cx="1061.4" cy="395.7" r="5.8" fill="#cc0000" fill-opacity="0.8"/>
<circle cx="1063.7" cy="402.2" r="5.8" fill="#cc0000" fill-opacity="0.8"/>
<circle cx="1073.2" cy="402.2" r="5.8" fill="#cc0000" fill-opacity="0.8"/>
<circle cx="1084.5" cy="435.4" r="5.8" fill="#cc0000" fill-opacity="0.8"/>
<circle cx="1089" cy="432" r="5.8" fill="#cc0000" fill-opacity="0.8"/>
<text x="757" y="354.6" fill="#1a9ad8" font-size="12.5" textLength="21.5" lengthAdjust="spacingAndGlyphs">BOS</text>
<text x="873" y="338" fill="#1a9ad8" font-size="12.5" textLength="21.5" lengthAdjust="spacingAndGlyphs">BOS</text>
<text x="933" y="320.8" fill="#1a9ad8" font-size="12.5" textLength="21.5" lengthAdjust="spacingAndGlyphs">BOS</text>
<text x="791.7" y="367" fill="#d21cc0" font-size="12.5" textLength="21.5" lengthAdjust="spacingAndGlyphs">BOS</text>
<text x="1078.5" y="407" fill="#d21cc0" font-size="12.5" textLength="21.5" lengthAdjust="spacingAndGlyphs">BOS</text>
<line x1="863.5" y1="129" x2="863.5" y2="678.5" stroke="#7a7a8c" stroke-width="1" stroke-dasharray="5 3"/>
</svg>
</body></html>
